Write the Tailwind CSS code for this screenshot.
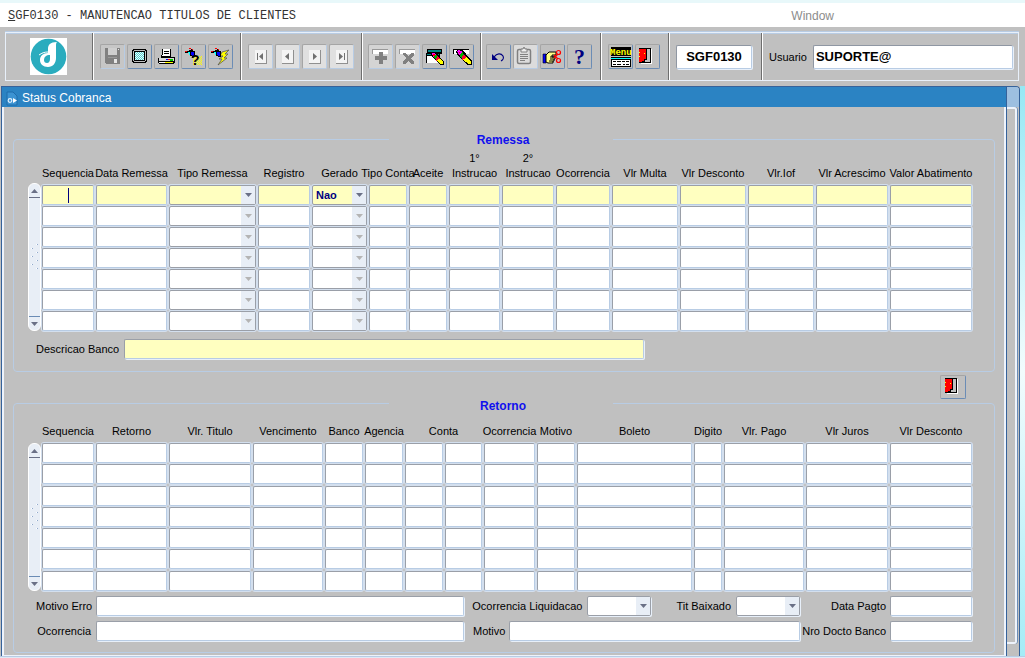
<!DOCTYPE html>
<html lang="pt-BR">
<head>
    <meta charset="UTF-8">
    <meta name="viewport" content="width=device-width, initial-scale=1.0">
    <title>SGF0130 - Manutencao Titulos de Clientes</title>
    <script src="https://cdn.jsdelivr.net/npm/@tailwindcss/browser@4"></script>
</head>
<body class="min-h-screen flex flex-col bg-[#c0c0c0] font-['Liberation_Sans',Arial,sans-serif] text-[11px] leading-4 text-black">
    <!-- Shared icons -->
    <svg class="absolute size-0" aria-hidden="true">
        <symbol id="icon-door" viewBox="0 0 16 18">
            <g shape-rendering="crispEdges">
                <path d="M12 1h1v15H2v-1h10z" fill="#fff"/>
                <path d="M0 0h12v15H3v-1h8V1H0z" fill="#000"/>
                <path d="M8 1h3v13H8z" fill="#c0c0c0"/>
                <path d="M0 1h7v10H5v2H3v1H0z" fill="#f00"/>
                <path d="M7 1h1v11H6v2H4v1H0v-1h3v-1h2v-2h2z" fill="#000"/>
                <path d="M0 4h1v1H0zM0 8h1v1H0zM5 5h1v1H5z" fill="#ff0"/>
            </g>
        </symbol>
        <symbol id="icon-pencil" viewBox="0 0 18 18">
            <path d="M0 3l3-3 4 1 11 12v5h-5L2 7z" fill="#000"/>
            <path d="M1 3l2-2 4 2-3 4z" fill="#f0f"/>
            <path d="M3 3h2v2H3z" fill="#f00"/>
            <path d="M4 7l3-4 2 3-3 4z" fill="#00b000"/>
            <path d="M6 10l3-4 3 3-4 4z" fill="#f03"/>
            <path d="M8 12l4-3 5 5v3h-3z" fill="#ff0"/>
        </symbol>
        <symbol id="icon-torch" viewBox="0 0 12 10">
            <g shape-rendering="crispEdges">
                <path d="M2 3h2V2h4v1h2v6H7V8H5V7H4V5H2z" fill="#000"/>
                <path d="M0 3h2v1H0zM4 0h2v1H4zM7 1h1v1H7z" fill="#f00"/>
                <path d="M0 4h2v1H0zM6 1h1v1H6z" fill="#000"/>
                <path d="M3 4h2v3H4V5H3z" fill="#0ff"/>
                <path d="M6 4h3v4H7V7H6z" fill="#00f"/>
            </g>
        </symbol>
    </svg>

    <!-- Menu bar -->
    <header class="h-[27px] border-t-3 border-[#e8f8fa] bg-white flex items-center justify-between pt-px pl-2 pr-[191px]">
        <h1 class="font-['Liberation_Mono',monospace] text-[12px] text-[#333]"><u>S</u>GF0130 - MANUTENCAO TITULOS DE CLIENTES</h1>
        <a href="#" class="text-[12px] text-[#8c8c8c]">Window</a>
    </header>

    <!-- Toolbar -->
    <div class="pt-[5px] pb-[5px] pl-[5px] pr-[6px]">
        <div class="h-[49px] border border-[#e8f0fa] shadow-[inset_0_1px_0_#b8cce4,0_-1px_0_#b8cce4] flex">
            <div class="w-[87px] pr-px border-r border-[#6e6e6e] shadow-[1px_0_0_#fff] flex items-center justify-center">
                <svg class="w-[37px] h-[37px]" viewBox="0 0 37 37">
                    <rect width="37" height="37" fill="#fff"/>
                    <circle cx="18.500" cy="18.500" r="17.800" fill="#2aacbe"/>
                    <path d="M27 4c-7 0-9 3-9 7v4c-5 0-8 3-8 7s3 7 8 7c5 0 8-4 8-9V8c0-2 0-3 1-4z" fill="#fff"/>
                    <path d="M20 17c-4 0-6 2-6 5 0 2 1 3 3 3s3-2 3-4z" fill="#2aacbe"/>
                    <path d="M9 17c3-2 5-3 9-3" stroke="#fff" fill="none"/>
                </svg>
            </div>
            <div class="w-[148px] pl-[7px] border-r border-[#6e6e6e] shadow-[1px_0_0_#fff] flex items-center gap-0.5">
                <button type="button" aria-label="Salvar" disabled class="size-[25px] rounded-[2px] border border-t-[#a5a5a5] border-l-[#a5a5a5] border-r-[#b8cce4] border-b-[#b8cce4] bg-[#c6c6c6]">
                    <svg class="w-full h-full" viewBox="0 0 23 23" shape-rendering="crispEdges">
                        <path d="M4 3h15v16H5l-1-1z" fill="#808080"/>
                        <path d="M7 3h9v7H7z" fill="#cfcfcf"/>
                        <path d="M17 4h1v1h-1zM13 14h3v4h-3z" fill="#e6e6e6"/>
                        <path d="M7 12h9v1H7z" fill="#999"/>
                    </svg>
                </button>
                <button type="button" aria-label="Tela" class="size-[25px] rounded-[2px] border border-t-[#a5a5a5] border-l-[#a5a5a5] border-r-[#6b8cb5] border-b-[#6b8cb5]">
                    <svg class="w-full h-full" viewBox="0 0 23 23" shape-rendering="crispEdges">
                        <path d="M5 4h13v1h1v12h-1v1H5v-1H4V5h1z" fill="#000"/>
                        <path d="M6 5h11v1h1v10h-1v1H6v-1H5V6h1z" fill="#c0c0c0"/>
                        <path d="M6 6h11v10H6z" fill="#000"/>
                        <path d="M7 7h9v8H7z" fill="#e8ffff"/>
                        <path d="M7 7.500h9M7 9.500h9M7 11.500h9M7 13.500h9M8 8.500h8M8 10.500h8M8 12.500h8M8 14.500h8" stroke="#5cc" stroke-dasharray="1 1"/>
                    </svg>
                </button>
                <button type="button" aria-label="Imprimir" class="size-[25px] rounded-[2px] border border-t-[#a5a5a5] border-l-[#a5a5a5] border-r-[#6b8cb5] border-b-[#6b8cb5]">
                    <svg class="w-full h-full" viewBox="0 0 23 23" shape-rendering="crispEdges">
                        <path d="M7 4h9v8h4v6h-1v1H4v-1H3v-5h3v-3h1z" fill="#000"/>
                        <path d="M8 4h7v7H7v-1h1z" fill="#fff"/>
                        <path d="M9 6h5v1H9zM9 8h5v1H9zM6 11h9v1H6z" fill="#000"/>
                        <path d="M4 13h15v3H4z" fill="#d8d8d8"/>
                        <path d="M11 14h2v1h-2z" fill="#00f"/><path d="M13 14h2v1h-2z" fill="#f00"/><path d="M15 14h3v2h-3z" fill="#0c0"/>
                        <path d="M10 17h8v1h-8z" fill="#ff0"/>
                        <path d="M4 17h6v1H4z" fill="#fff"/>
                    </svg>
                </button>
                <button type="button" aria-label="Entrar consulta" class="size-[25px] rounded-[2px] border border-t-[#a5a5a5] border-l-[#a5a5a5] border-r-[#6b8cb5] border-b-[#6b8cb5]">
                    <svg class="w-full h-full" viewBox="0 0 23 23" shape-rendering="crispEdges">
                        <path d="M11 11.500h9M11 13.500h9M11 15.500h9M11 17.500h9M11 19.500h9M12 12.500h8M12 14.500h8M12 16.500h8M12 18.500h8" stroke="#ff0" stroke-dasharray="1 1"/>
                        <use href="#icon-torch" x="3" y="3" width="12" height="10"/>
                        <text x="9" y="20" class="text-[14px] font-bold">?</text>
                    </svg>
                </button>
                <button type="button" aria-label="Executar consulta" class="size-[25px] rounded-[2px] border border-t-[#a5a5a5] border-l-[#a5a5a5] border-r-[#6b8cb5] border-b-[#6b8cb5]">
                    <svg class="w-full h-full" viewBox="0 0 23 23">
                        <path d="M20 5l-7 2-2 4h3l-4 3h3l-4 6 9-7h-3l4-4h-3z" fill="#ff0" stroke="#555" stroke-width=".8"/>
                        <use href="#icon-torch" x="2" y="3" width="12" height="10"/>
                    </svg>
                </button>
            </div>
            <div id="nav-buttons" class="w-[121px] pl-[7px] border-r border-[#6e6e6e] shadow-[1px_0_0_#fff] flex items-center gap-0.5"></div>
            <div class="w-[119px] pl-[6px] border-r border-[#6e6e6e] shadow-[1px_0_0_#fff] flex items-center gap-0.5">
                <button type="button" aria-label="Inserir registro" disabled class="size-[25px] rounded-[2px] border border-t-[#a5a5a5] border-l-[#a5a5a5] border-r-[#b8cce4] border-b-[#b8cce4] bg-[#d4d4d4]">
                    <svg class="w-full h-full" viewBox="0 0 23 23" shape-rendering="crispEdges">
                        <path d="M3 4h16v5H3z" fill="#999"/><path d="M4 5h15v4H4z" fill="#fff"/>
                        <path d="M10 7h4v4h4v4h-4v4h-4v-4H6v-4h4z" fill="#808080"/>
                    </svg>
                </button>
                <button type="button" aria-label="Remover registro" disabled class="size-[25px] rounded-[2px] border border-t-[#a5a5a5] border-l-[#a5a5a5] border-r-[#b8cce4] border-b-[#b8cce4] bg-[#d4d4d4]">
                    <svg class="w-full h-full" viewBox="0 0 23 23" shape-rendering="crispEdges">
                        <path d="M3 4h16v5H3z" fill="#999"/><path d="M4 5h15v4H4z" fill="#fff"/>
                        <path d="M7 8h3l2 3 3-3h3v2l-3 3 3 4v2h-3l-3-3-2 3H7v-2l3-4-3-3z" fill="#808080"/>
                    </svg>
                </button>
                <button type="button" aria-label="Limpar bloco" class="size-[25px] rounded-[2px] border border-t-[#a5a5a5] border-l-[#a5a5a5] border-r-[#6b8cb5] border-b-[#6b8cb5]">
                    <svg class="w-full h-full" viewBox="0 0 23 23" shape-rendering="crispEdges">
                        <path d="M4 4h15v5H4zM3 8h14v10H3z" fill="#000"/>
                        <path d="M5 5h13v2H5zM4 9h12v1H4z" fill="#088"/>
                        <path d="M4 11h12v7H4z" fill="#fff"/>
                        <use href="#icon-pencil" x="8" y="7" width="13" height="13"/>
                    </svg>
                </button>
                <button type="button" aria-label="Limpar registro" class="size-[25px] rounded-[2px] border border-t-[#a5a5a5] border-l-[#a5a5a5] border-r-[#6b8cb5] border-b-[#6b8cb5]">
                    <svg class="w-full h-full" viewBox="0 0 23 23" shape-rendering="crispEdges">
                        <path d="M3 4h16v5H3z" fill="#000"/><path d="M4 5h15v4H4z" fill="#fff"/>
                        <use href="#icon-pencil" x="6" y="4" width="16" height="16"/>
                    </svg>
                </button>
            </div>
            <div class="w-[120px] pl-[5px] border-r border-[#6e6e6e] shadow-[1px_0_0_#fff] flex items-center gap-0.5">
                <button type="button" aria-label="Desfazer" class="size-[25px] rounded-[2px] border border-t-[#a5a5a5] border-l-[#a5a5a5] border-r-[#6b8cb5] border-b-[#6b8cb5]">
                    <svg class="w-full h-full" viewBox="0 0 23 23">
                        <path d="M5 9v6h6z" fill="#000080"/>
                        <path d="M7 12c3-4 7-4 9-1 1 2 0 4-2 5" fill="none" stroke="#000080" stroke-width="1.200"/>
                    </svg>
                </button>
                <button type="button" aria-label="Colar" disabled class="size-[25px] rounded-[2px] border border-t-[#a5a5a5] border-l-[#a5a5a5] border-r-[#b8cce4] border-b-[#b8cce4] bg-[#dcdcdc]">
                    <svg class="w-full h-full" viewBox="0 0 23 23" fill="none" stroke="#808080">
                        <rect x="3.500" y="4.500" width="13" height="14" rx="1.500" stroke-width="1.500"/>
                        <path d="M6 9.500h8M6 11.500h8M6 13.500h8M6 15.500h5" />
                        <path d="M7 4h2l1-2 1 2h2v3H7z" fill="#eee"/>
                    </svg>
                </button>
                <button type="button" aria-label="Recortar" class="size-[25px] rounded-[2px] border border-t-[#a5a5a5] border-l-[#a5a5a5] border-r-[#6b8cb5] border-b-[#6b8cb5]">
                    <svg class="w-full h-full" viewBox="0 0 23 23">
                        <path d="M2 9h3v9H2z" fill="#00f" stroke="#000" stroke-width=".6"/>
                        <path d="M5 10l3-3h7v3h-4v2h3v2h-1v2h-1v2H7l-2-1z" fill="#ff8" stroke="#000"/>
                        <path d="M9 12h5M9 14h4M8 16h4" stroke="#000"/>
                        <g fill="none" stroke="#f00" stroke-width="1.200"><circle cx="17.500" cy="7.500" r="2"/><circle cx="17.500" cy="15.500" r="2"/><path d="M13 13l4-4M13 10l4 4"/></g>
                    </svg>
                </button>
                <button type="button" aria-label="Ajuda" class="size-[25px] rounded-[2px] border border-t-[#a5a5a5] border-l-[#a5a5a5] border-r-[#6b8cb5] border-b-[#6b8cb5] font-['Liberation_Serif',serif] text-[22px] leading-[22px] font-bold text-[#000080]">?</button>
            </div>
            <div class="w-[68px] pl-[7px] border-r border-[#6e6e6e] shadow-[1px_0_0_#fff] flex items-center gap-0.5">
                <button type="button" aria-label="Menu" class="size-[25px] rounded-[2px] border border-t-[#a5a5a5] border-l-[#a5a5a5] border-r-[#6b8cb5] border-b-[#6b8cb5]">
                    <svg class="w-full h-full" viewBox="0 0 23 23">
                        <path d="M2 2h20v9H2z" fill="#000"/>
                        <text x="1" y="10" fill="#ff0" class="font-['Liberation_Mono',monospace] text-[9px] font-bold">Menu</text>
                        <path d="M2 12h20v10H2z" fill="#000"/><path d="M2 13h20v1H2z" fill="#0ff"/><path d="M3 15h18v6H3z" fill="#fff"/>
                        <path d="M4 16.500h3M8 16.500h4M13 16.500h3M17 16.500h3M4 19.500h3M8 19.500h4M14 19.500h2M17 19.500h3" stroke="#000"/>
                    </svg>
                </button>
                <button type="button" aria-label="Sair" class="size-[25px] rounded-[2px] border border-t-[#a5a5a5] border-l-[#a5a5a5] border-r-[#6b8cb5] border-b-[#6b8cb5] pl-[3px]">
                    <svg class="w-4 h-[18px]"><use href="#icon-door"/></svg>
                </button>
            </div>
            <div class="w-[93px] pl-[7px] border-r border-[#6e6e6e] shadow-[1px_0_0_#fff] flex items-center">
                <input type="text" aria-label="Programa" value="SGF0130" class="w-[76px] h-6 rounded-[2px] border border-t-[#8f97a3] border-l-[#8f97a3] border-r-[#b8cce4] border-b-[#b8cce4] shadow-[1px_1px_0_#e8f0fa] bg-white text-center text-[13px] font-bold">
            </div>
            <div class="flex-1 pl-[7px] pr-[5px] flex items-center gap-1.5">
                <label for="usuario">Usuario</label>
                <input type="text" id="usuario" value="SUPORTE@" class="flex-1 min-w-0 h-6 px-0.5 rounded-[2px] border border-t-[#8f97a3] border-l-[#8f97a3] border-r-[#b8cce4] border-b-[#b8cce4] shadow-[1px_1px_0_#e8f0fa] bg-white text-[13px] font-bold">
            </div>
        </div>
    </div>

    <!-- Window -->
    <div class="flex-1 flex">
        <div class="flex-1 min-w-0 flex flex-col ml-px border-t border-l border-[#36629a]">
            <div class="h-5 pt-px bg-[#2b83c3] flex items-center gap-1 pl-1 text-white">
                <svg class="w-3 h-4" viewBox="0 0 12 16">
                    <path d="M1 2h6l4 4v9H1z" fill="#3c93d2" stroke="#1f6cab"/>
                    <circle cx="4" cy="10.500" r="1.800" stroke="#dcefff" stroke-width="1.200" fill="none"/>
                    <path d="M7 8v5l4-2.500z" fill="#fff"/>
                </svg>
                <h2 class="text-[12px]">Status Cobranca</h2>
            </div>
            <form class="flex-1 border-x-2 border-b border-[#eef3fb] px-[9px] pt-[23px] pb-0.5">
                <fieldset class="border border-[#b8cce4] rounded-[4px] pl-[14px] pr-[20px] pt-[3px] pb-[12px]">
                    <legend class="w-[224px] mx-auto pt-0.5 pl-1 text-center text-[12px] font-bold text-[#1010ee]">Remessa</legend>
                    <div class="flex gap-px">
                        <div class="scrollbar mt-[32px] w-[13px]"></div>
                        <table class="flex-1 w-full h-[181px] table-fixed">
                            <colgroup>
                                <col class="w-[54px]"><col class="w-[73px]"><col class="w-[89px]"><col class="w-[54px]"><col class="w-[57px]"><col class="w-[40px]"><col class="w-[40px]"><col class="w-[53px]"><col class="w-[54px]"><col class="w-[56px]"><col class="w-[68px]"><col class="w-[68px]"><col class="w-[68px]"><col class="w-[74px]"><col class="w-[84px]">
                            </colgroup>
                            <thead><tr id="remessa-head" class="h-[32px]"></tr></thead>
                            <tbody id="remessa-rows"></tbody>
                        </table>
                    </div>
                    <div class="mt-[7px] pl-2 flex items-center gap-[5px]">
                        <label for="descricao-banco" class="w-[83px] whitespace-nowrap">Descricao Banco</label>
                        <input type="text" id="descricao-banco" class="w-[520px] h-5 rounded-[2px] border border-t-[#9a9fa8] border-l-[#9a9fa8] border-r-[#b8cce4] border-b-[#b8cce4] shadow-[1px_1px_0_#e8f0fa] bg-[#ffffc0]">
                    </div>
                </fieldset>

                <div class="mt-[3px] pr-[29px] flex justify-end">
                    <button type="button" aria-label="Fechar" class="w-[26px] h-6 pl-1 rounded-[2px] border border-t-[#a5a5a5] border-l-[#a5a5a5] border-r-[#6b8cb5] border-b-[#6b8cb5]">
                        <svg class="w-4 h-[18px]"><use href="#icon-door"/></svg>
                    </button>
                </div>

                <fieldset class="-mt-[7px] border border-[#b8cce4] rounded-[4px] pl-[14px] pr-[20px] pb-[11px]">
                    <legend class="w-[224px] mx-auto pt-1.5 pl-1 text-center text-[12px] font-bold text-[#1010ee]">Retorno</legend>
                    <div class="flex gap-px">
                        <div class="scrollbar mt-[29px] w-[13px]"></div>
                        <table class="flex-1 w-full h-[178px] table-fixed">
                            <colgroup>
                                <col class="w-[54px]"><col class="w-[73px]"><col class="w-[84px]"><col class="w-[72px]"><col class="w-[40px]"><col class="w-[40px]"><col class="w-[40px]"><col class="w-[39px]"><col class="w-[53px]"><col class="w-[40px]"><col class="w-[117px]"><col class="w-[30px]"><col class="w-[82px]"><col class="w-[84px]"><col class="w-[84px]">
                            </colgroup>
                            <thead><tr id="retorno-head" class="h-[29px]"></tr></thead>
                            <tbody id="retorno-rows"></tbody>
                        </table>
                    </div>
                    <div class="mt-1 pl-2 grid grid-cols-[428fr_336fr_174px] gap-y-[5px] whitespace-nowrap">
                        <div class="flex items-center gap-[5px]">
                            <label for="motivo-erro" class="w-[55px] text-right">Motivo Erro</label>
                            <input type="text" id="motivo-erro" class="flex-1 min-w-0 h-5 rounded-[2px] border border-t-[#9a9fa8] border-l-[#9a9fa8] border-r-[#b8cce4] border-b-[#b8cce4] shadow-[1px_1px_0_#e8f0fa] bg-white">
                        </div>
                        <div class="flex items-center justify-end gap-[5px]">
                            <label for="ocorrencia-liq">Ocorrencia Liquidacao</label>
                            <div class="relative w-16 mr-5">
                                <select id="ocorrencia-liq" class="block w-full h-5 appearance-none rounded-[2px] border border-[#9a9fa8] shadow-[1px_1px_0_#e8f0fa] bg-white"><option></option></select>
                                <span class="absolute right-px top-px bottom-px w-[14px] bg-[#e8eef6] flex items-center justify-center pointer-events-none"><svg class="w-[7px] h-1" viewBox="0 0 7 4"><path d="M0 0h7L3.500 4z" fill="#6a7086"/></svg></span>
                            </div>
                            <label for="tit-baixado">Tit Baixado</label>
                            <div class="relative w-16">
                                <select id="tit-baixado" class="block w-full h-5 appearance-none rounded-[2px] border border-[#9a9fa8] shadow-[1px_1px_0_#e8f0fa] bg-white"><option></option></select>
                                <span class="absolute right-px top-px bottom-px w-[14px] bg-[#e8eef6] flex items-center justify-center pointer-events-none"><svg class="w-[7px] h-1" viewBox="0 0 7 4"><path d="M0 0h7L3.500 4z" fill="#6a7086"/></svg></span>
                            </div>
                        </div>
                        <div class="flex items-center justify-end gap-1 pr-0.5">
                            <label for="data-pagto">Data Pagto</label>
                            <input type="text" id="data-pagto" class="w-[82px] h-5 rounded-[2px] border border-t-[#9a9fa8] border-l-[#9a9fa8] border-r-[#b8cce4] border-b-[#b8cce4] shadow-[1px_1px_0_#e8f0fa] bg-white">
                        </div>
                        <div class="flex items-center gap-[5px]">
                            <label for="ocorrencia" class="w-[55px] text-right">Ocorrencia</label>
                            <input type="text" id="ocorrencia" class="flex-1 min-w-0 h-5 rounded-[2px] border border-t-[#9a9fa8] border-l-[#9a9fa8] border-r-[#b8cce4] border-b-[#b8cce4] shadow-[1px_1px_0_#e8f0fa] bg-white">
                        </div>
                        <div class="flex items-center gap-1 pl-[9px]">
                            <label for="motivo">Motivo</label>
                            <input type="text" id="motivo" class="flex-1 min-w-0 h-5 rounded-[2px] border border-t-[#9a9fa8] border-l-[#9a9fa8] border-r-[#b8cce4] border-b-[#b8cce4] shadow-[1px_1px_0_#e8f0fa] bg-white">
                        </div>
                        <div class="flex items-center justify-end gap-1 pr-0.5">
                            <label for="nro-docto">Nro Docto Banco</label>
                            <input type="text" id="nro-docto" class="w-[82px] h-5 rounded-[2px] border border-t-[#9a9fa8] border-l-[#9a9fa8] border-r-[#b8cce4] border-b-[#b8cce4] shadow-[1px_1px_0_#e8f0fa] bg-white">
                        </div>
                    </div>
                </fieldset>
            </form>
        </div>
        <!-- Outer frame, right side -->
        <div class="w-[14px] border-x border-t border-[#36629a] rounded-tr-[4px] flex flex-col">
            <div class="h-5 bg-[#9dbfe0] rounded-tr-[3px]"></div>
            <div class="flex-1 mr-[2px] mb-3 border-t-2 border-r-2 border-b-2 border-[#eef3fb] rounded-r-[3px] shadow-[1px_0_0_#6b8cb5]"></div>
        </div>
        <div class="w-[5px] bg-linear-to-b from-[#96e8f4] via-[#f2fcfd] to-[#a4ecf6]"></div>
    </div>
    <div class="h-0.5 bg-[#dfe9f5] border-t border-[#b8cce4]"></div>

    <script>
        const ROWS = 7;
        const remessa = ['Sequencia', 'Data Remessa', 'Tipo Remessa', 'Registro', 'Gerado', 'Tipo Conta', 'Aceite', '1°<br>Instrucao', '2°<br>Instrucao', 'Ocorrencia', 'Vlr Multa', 'Vlr Desconto', 'Vlr.Iof', 'Vlr Acrescimo', 'Valor Abatimento'];
        const retorno = ['Sequencia', 'Retorno', 'Vlr. Titulo', 'Vencimento', 'Banco', 'Agencia', 'Conta', 'Conta', 'Ocorrencia', 'Motivo', 'Boleto', 'Digito', 'Vlr. Pago', 'Vlr Juros', 'Vlr Desconto'];

        function headCell(label, span) {
            return `<th scope="col" colspan="${span}" class="p-0 pb-1 pr-0.5 align-bottom font-normal leading-[15px]"><div class="flex justify-center text-center whitespace-nowrap"><span>${label}</span></div></th>`;
        }

        function inputCell(label, active, caret) {
            const bg = active ? 'bg-[#ffffc0]' : 'bg-white';
            const mark = caret ? '<span class="absolute left-1/2 top-[3px] h-[15px] w-px bg-[#000080]"></span>' : '';
            return `<td class="p-0 pr-0.5 align-top"><div class="relative"><input type="text" aria-label="${label}" class="block w-full h-5 rounded-[2px] border border-t-[#9a9fa8] border-l-[#9a9fa8] border-r-[#b8cce4] border-b-[#b8cce4] shadow-[0_0_0_1px_#d3dfee] ${bg}">${mark}</div></td>`;
        }

        function selectCell(label, active, value) {
            const bg = active ? 'bg-[#ffffc0]' : 'bg-white';
            const arrow = active ? '#6a7086' : '#b4b4b4';
            return `<td class="p-0 pr-0.5 align-top"><div class="relative"><select aria-label="${label}" class="block w-full h-5 pl-[3px] appearance-none rounded-[2px] border border-[#9a9fa8] shadow-[0_0_0_1px_#d3dfee] font-bold text-[#000080] ${bg}"><option>${value}</option></select><span class="absolute right-px top-px bottom-px w-[14px] bg-[#e8eef6] flex items-center justify-center pointer-events-none"><svg class="w-[7px] h-1" viewBox="0 0 7 4"><path d="M0 0h7L3.500 4z" fill="${arrow}"/></svg></span></div></td>`;
        }

        document.getElementById('remessa-head').innerHTML = remessa.map(l => headCell(l, 1)).join('');
        document.getElementById('retorno-head').innerHTML = retorno.filter((l, i) => i !== 7).map(l => headCell(l, l === 'Conta' ? 2 : 1)).join('');

        let html = '';
        for (let r = 0; r < ROWS; r++) {
            html += '<tr>' + remessa.map((l, i) => {
                const label = l.replace('<br>', ' ');
                if (i === 2) return selectCell(label, r === 0, '');
                if (i === 4) return selectCell(label, r === 0, r === 0 ? 'Nao' : '');
                return inputCell(label, r === 0, r === 0 && i === 0);
            }).join('') + '</tr>';
        }
        document.getElementById('remessa-rows').innerHTML = html;
        document.getElementById('retorno-rows').innerHTML = ('<tr>' + retorno.map(l => inputCell(l, false, false)).join('') + '</tr>').repeat(ROWS);

        // Scrollbars beside both tables
        document.querySelectorAll('.scrollbar').forEach(el => {
            el.innerHTML = `<div class="h-[148px] rounded-[6px] border border-white bg-[#e8eef6] flex flex-col items-center justify-between">
                <button type="button" aria-label="Subir" class="w-full h-[14px] border-b border-[#6a7086] flex items-center justify-center"><svg class="w-[7px] h-1" viewBox="0 0 7 4"><path d="M0 4h7L3.500 0z" fill="#6a7086"/></svg></button>
                <svg class="w-[9px] h-[26px]" viewBox="0 0 9 26" shape-rendering="crispEdges"><path d="M6 0h1v1H6zM1 4h1v1H1zM6 8h1v1H6zM1 12h1v1H1zM6 16h1v1H6zM1 20h1v1H1zM6 24h1v1H6z" fill="#fff"/><path d="M7 0h1v1H7zM2 4h1v1H2zM7 8h1v1H7zM2 12h1v1H2zM7 16h1v1H7zM2 20h1v1H2zM7 24h1v1H7z" fill="#8fa9cc"/></svg>
                <button type="button" aria-label="Descer" class="w-full h-[14px] border-t border-[#6b8cb5] flex items-center justify-center"><svg class="w-[7px] h-1" viewBox="0 0 7 4"><path d="M0 0h7L3.500 4z" fill="#6a7086"/></svg></button>
            </div>`;
        });

        // Record navigation: first, previous, next, last
        const nav = [
            ['Primeiro', 'M8 8h1v7H8zM14 8v7l-4-3.500z'],
            ['Anterior', 'M13 8v7l-4-3.500z'],
            ['Proximo', 'M10 8v7l4-3.500z'],
            ['Ultimo', 'M14 8h1v7h-1zM9 8v7l4-3.500z']
        ];
        document.getElementById('nav-buttons').innerHTML = nav.map(([label, d]) =>
            `<button type="button" aria-label="${label}" disabled class="size-[25px] rounded-[2px] border border-t-[#a5a5a5] border-l-[#a5a5a5] border-r-[#b8cce4] border-b-[#b8cce4] bg-[#e0e0e0]"><svg class="w-full h-full" viewBox="0 0 23 23"><path d="M6 5h12v14H6z" fill="#909090"/><path d="M6 5h11v13H6z" fill="#f4f4f4"/><path d="${d}" fill="#707070"/></svg></button>`
        ).join('');
    </script>
</body>
</html>
